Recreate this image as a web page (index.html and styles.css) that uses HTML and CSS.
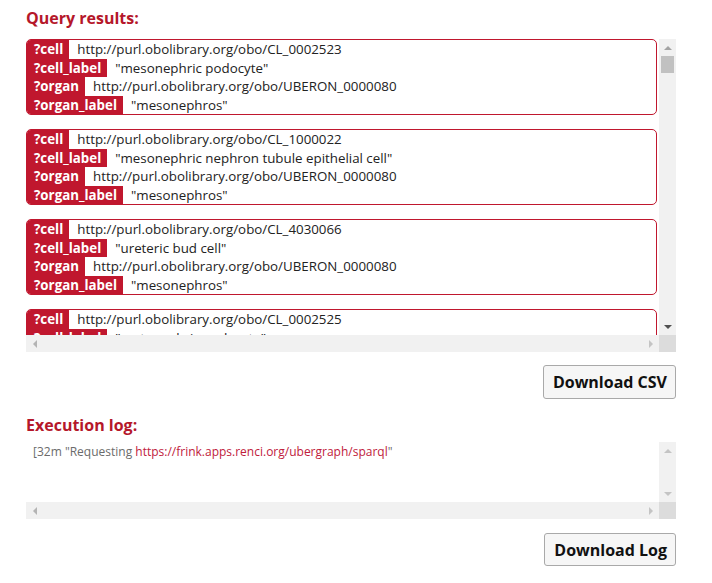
FILE: index.html
```html
<!DOCTYPE html>
<html lang="en">
<head>
<meta charset="utf-8">
<title>Query results</title>
<link rel="stylesheet" href="styles.css">
</head>
<body>
<div class="page">
  <h2 class="heading">Query results:</h2>
  <div class="scrollbox results">
    <div class="viewport">
      <div class="card">
        <div class="row"><span class="lbl">?cell</span><span class="val">http://purl.obolibrary.org/obo/CL_0002523</span></div>
        <div class="row"><span class="lbl">?cell_label</span><span class="val">"mesonephric podocyte"</span></div>
        <div class="row"><span class="lbl">?organ</span><span class="val">http://purl.obolibrary.org/obo/UBERON_0000080</span></div>
        <div class="row"><span class="lbl">?organ_label</span><span class="val">"mesonephros"</span></div>
      </div>
      <div class="card">
        <div class="row"><span class="lbl">?cell</span><span class="val">http://purl.obolibrary.org/obo/CL_1000022</span></div>
        <div class="row"><span class="lbl">?cell_label</span><span class="val">"mesonephric nephron tubule epithelial cell"</span></div>
        <div class="row"><span class="lbl">?organ</span><span class="val">http://purl.obolibrary.org/obo/UBERON_0000080</span></div>
        <div class="row"><span class="lbl">?organ_label</span><span class="val">"mesonephros"</span></div>
      </div>
      <div class="card">
        <div class="row"><span class="lbl">?cell</span><span class="val">http://purl.obolibrary.org/obo/CL_4030066</span></div>
        <div class="row"><span class="lbl">?cell_label</span><span class="val">"ureteric bud cell"</span></div>
        <div class="row"><span class="lbl">?organ</span><span class="val">http://purl.obolibrary.org/obo/UBERON_0000080</span></div>
        <div class="row"><span class="lbl">?organ_label</span><span class="val">"mesonephros"</span></div>
      </div>
      <div class="card">
        <div class="row"><span class="lbl">?cell</span><span class="val">http://purl.obolibrary.org/obo/CL_0002525</span></div>
        <div class="row"><span class="lbl">?cell_label</span><span class="val">"metanephric podocyte"</span></div>
        <div class="row"><span class="lbl">?organ</span><span class="val">http://purl.obolibrary.org/obo/UBERON_0000080</span></div>
        <div class="row"><span class="lbl">?organ_label</span><span class="val">"mesonephros"</span></div>
      </div>
    </div>
    <div class="vbar">
      <div class="sbtn"><span class="tri up"></span></div>
      <div class="thumb"></div>
      <div class="track"></div>
      <div class="sbtn"><span class="tri down"></span></div>
    </div>
    <div class="hbar">
      <div class="sbtn"><span class="tri left off"></span></div>
      <div class="track"></div>
      <div class="sbtn"><span class="tri right off"></span></div>
    </div>
    <div class="corner"></div>
  </div>
  <div class="actions actions-csv"><button class="btn" type="button">Download CSV</button></div>

  <h2 class="heading heading-log">Execution log:</h2>
  <div class="scrollbox log">
    <div class="viewport log-view"><pre class="logline">[32m "Requesting <span class="url">https://frink.apps.renci.org/ubergraph/sparql</span>"</pre></div>
    <div class="vbar">
      <div class="sbtn"><span class="tri up off"></span></div>
      <div class="track"></div>
      <div class="sbtn"><span class="tri down off"></span></div>
    </div>
    <div class="hbar">
      <div class="sbtn"><span class="tri left off"></span></div>
      <div class="track"></div>
      <div class="sbtn"><span class="tri right off"></span></div>
    </div>
    <div class="corner"></div>
  </div>
  <div class="actions actions-log"><button class="btn btn-log" type="button">Download Log</button></div>
</div>
</body>
</html>
```

FILE: styles.css
```css
html, body {
  margin: 0;
  padding: 0;
  background: #ffffff;
}

body {
  font-family: "Open Sans", "Liberation Sans", sans-serif;
  color: #222222;
}

.page {
  width: 650px;
  padding: 7px 0 0 26px;
}

.heading {
  margin: 0 0 10px 0;
  font-size: 16px;
  line-height: 22px;
  font-weight: 700;
  color: #b5172a;
}

.heading-log {
  margin-bottom: 6px;
}

.scrollbox {
  display: grid;
  grid-template-columns: 1fr 17px;
  background: #ffffff;
}

.results {
  grid-template-rows: 296px 17px;
}

.log {
  grid-template-rows: 60px 17px;
}

.viewport {
  overflow: hidden;
  padding-right: 2px;
}

.card {
  border: 1px solid #c0172e;
  border-radius: 5px;
  overflow: hidden;
  margin-bottom: 14px;
  font-size: 13.33px;
  line-height: 18.5px;
}

.row {
  display: flex;
  white-space: nowrap;
}

.lbl {
  background: #c0172e;
  color: #ffffff;
  font-weight: 700;
  padding: 0 6px 0 7px;
}

.val {
  margin-left: 8px;
  color: #222222;
}

.vbar {
  background: #f1f1f1;
  display: flex;
  flex-direction: column;
}

.hbar {
  background: #f1f1f1;
  display: flex;
}

.corner {
  background: #dcdcdc;
}

.track {
  flex: 1;
}

.sbtn {
  width: 17px;
  height: 17px;
  flex: none;
  display: flex;
  align-items: center;
  justify-content: center;
}

.thumb {
  height: 17px;
  margin: 0 2px;
  background: #c1c1c1;
  flex: none;
}

.tri {
  width: 0;
  height: 0;
  display: block;
}

.tri.up {
  border-left: 4px solid transparent;
  border-right: 4px solid transparent;
  border-bottom: 4px solid #a3a3a3;
}

.tri.down {
  border-left: 4px solid transparent;
  border-right: 4px solid transparent;
  border-top: 4px solid #505050;
}

.tri.left {
  border-top: 4px solid transparent;
  border-bottom: 4px solid transparent;
  border-right: 4px solid #a3a3a3;
}

.tri.right {
  border-top: 4px solid transparent;
  border-bottom: 4px solid transparent;
  border-left: 4px solid #a3a3a3;
}

.tri.up.off {
  border-bottom-color: #c4c4c4;
}

.tri.down.off {
  border-top-color: #c4c4c4;
}

.tri.left.off {
  border-right-color: #b4b4b4;
}

.tri.right.off {
  border-left-color: #c4c4c4;
}

.log-view {
  padding: 1px 7px 0 7px;
}

.logline {
  margin: 0;
  font-family: "Open Sans", "Liberation Sans", sans-serif;
  font-size: 12px;
  line-height: 17px;
  color: #6b6b6b;
  white-space: pre;
}

.url {
  color: #c0203c;
}

.actions {
  display: flex;
  justify-content: flex-end;
}

.actions-csv {
  margin-top: 13px;
  margin-bottom: 15px;
}

.actions-log {
  margin-top: 14px;
}

.btn {
  font-family: "Open Sans", "Liberation Sans", sans-serif;
  font-size: 16px;
  font-weight: 700;
  color: #111111;
  background: #f6f6f6;
  border: 1px solid #a9a9a9;
  border-radius: 3px;
  padding: 0 8px 0 9px;
  margin: 0;
  height: 34px;
  white-space: nowrap;
}

.btn-log {
  height: 33px;
}
```
